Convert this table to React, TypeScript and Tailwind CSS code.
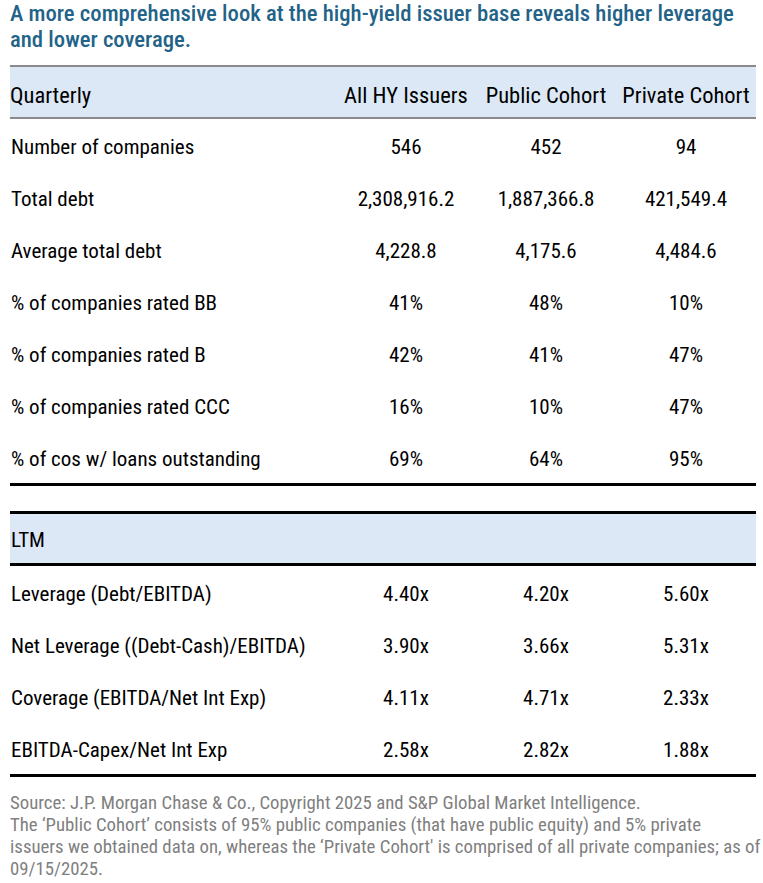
import React from 'react';

const quarterly = [
  ['Number of companies', '546', '452', '94'],
  ['Total debt', '2,308,916.2', '1,887,366.8', '421,549.4'],
  ['Average total debt', '4,228.8', '4,175.6', '4,484.6'],
  ['% of companies rated BB', '41%', '48%', '10%'],
  ['% of companies rated B', '42%', '41%', '47%'],
  ['% of companies rated CCC', '16%', '10%', '47%'],
  ['% of cos w/ loans outstanding', '69%', '64%', '95%'],
];

const ltm = [
  ['Leverage (Debt/EBITDA)', '4.40x', '4.20x', '5.60x'],
  ['Net Leverage ((Debt-Cash)/EBITDA)', '3.90x', '3.66x', '5.31x'],
  ['Coverage (EBITDA/Net Int Exp)', '4.11x', '4.71x', '2.33x'],
  ['EBITDA-Capex/Net Int Exp', '2.58x', '2.82x', '1.88x'],
];

const Row: React.FC<{ cells: string[] }> = ({ cells }) => (
  <div className="flex items-center h-[52px] pt-[5px]">
    <div className="flex-1 pl-[1px] whitespace-nowrap">{cells[0]}</div>
    {cells.slice(1).map((c, i) => (
      <div key={i} className="w-[140px] text-center">{c}</div>
    ))}
  </div>
);

export default function App() {
  return (
    <div className="w-[763px] h-[883px] bg-white text-[21px] text-black overflow-hidden font-['Roboto_Condensed','Roboto',sans-serif] font-stretch-condensed">
      <h1 className="pl-[10px] pt-[1px] pr-2 text-[22.7px] leading-[26px] font-medium text-[#236388]">
        A more comprehensive look at the high-yield issuer base reveals higher leverage and lower coverage.
      </h1>

      <div className="ml-[10px] w-[746px] mt-[12px]">
        <div className="flex items-center h-[54px] pt-[7px] bg-[#dce8f5] border-y-2 border-[#8a8a8a] text-[22.5px]">
          <div className="flex-1">Quarterly</div>
          <div className="w-[140px] text-center whitespace-nowrap">All HY Issuers</div>
          <div className="w-[140px] text-center whitespace-nowrap">Public Cohort</div>
          <div className="w-[140px] text-center whitespace-nowrap">Private Cohort</div>
        </div>
        <div className="border-b-[3px] border-black">
          {quarterly.map((r) => (
            <Row key={r[0]} cells={r} />
          ))}
        </div>

        <div className="h-[25px]" />

        <div className="flex items-center h-[55px] pt-[5px] bg-[#dce8f5] border-y-[3px] border-black pl-[1px]">
          LTM
        </div>
        <div className="border-b-[3px] border-black">
          {ltm.map((r) => (
            <Row key={r[0]} cells={r} />
          ))}
        </div>
      </div>

      <div className="pl-[10px] pt-[15px] text-[18.8px] leading-[22px] text-[#7f7f7f] whitespace-nowrap">
        <p>Source: J.P. Morgan Chase &amp; Co., Copyright 2025 and S&amp;P Global Market Intelligence.</p>
        <p>
          The ‘Public Cohort’ consists of 95% public companies (that have public equity) and 5% private
          <br />
          issuers we obtained data on, whereas the ‘Private Cohort' is comprised of all private companies; as of
          <br />
          09/15/2025.
        </p>
      </div>
    </div>
  );
}
